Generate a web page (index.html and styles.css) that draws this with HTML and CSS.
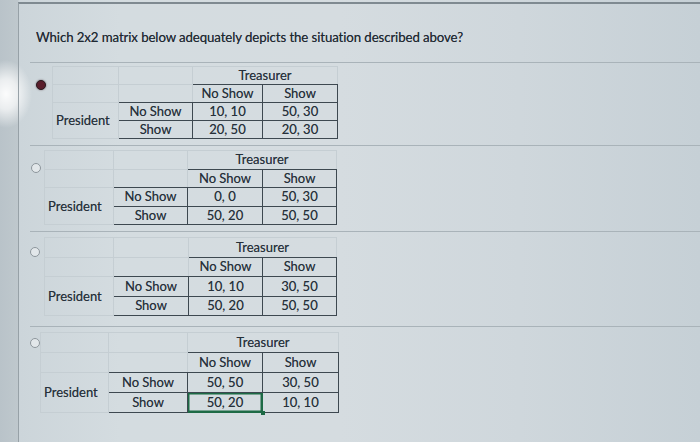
FILE: index.html
```html
<!DOCTYPE html>
<html>
<head>
<meta charset="utf-8">
<link rel="stylesheet" href="styles.css">
</head>
<body>
<div class="screen">
  <div class="panel">
    <p class="question">Which 2x2 matrix below adequately depicts the situation described above?</p>
    <div class="options">
      <div class="option o1">
        <span class="radio checked"></span>
        <table class="matrix">
          <colgroup><col class="c0"><col class="c1"><col class="c2"><col class="c3"></colgroup>
          <tr><td class="g"></td><td class="g"></td><td class="title" colspan="2">Treasurer</td></tr>
          <tr><td class="g"></td><td class="g gb"></td><td class="d">No Show</td><td class="d">Show</td></tr>
          <tr><td class="g pres" rowspan="2">President</td><td class="d">No Show</td><td class="d">10, 10</td><td class="d">50, 30</td></tr>
          <tr><td class="d">Show</td><td class="d">20, 50</td><td class="d">20, 30</td></tr>
        </table>
      </div>
      <div class="option o2">
        <span class="radio"></span>
        <table class="matrix">
          <colgroup><col class="c0"><col class="c1"><col class="c2"><col class="c3"></colgroup>
          <tr><td class="g"></td><td class="g"></td><td class="title" colspan="2">Treasurer</td></tr>
          <tr><td class="g"></td><td class="g gb"></td><td class="d">No Show</td><td class="d">Show</td></tr>
          <tr><td class="g pres" rowspan="2">President</td><td class="d">No Show</td><td class="d">0, 0</td><td class="d">50, 30</td></tr>
          <tr><td class="d">Show</td><td class="d">50, 20</td><td class="d">50, 50</td></tr>
        </table>
      </div>
      <div class="option o3">
        <span class="radio"></span>
        <table class="matrix">
          <colgroup><col class="c0"><col class="c1"><col class="c2"><col class="c3"></colgroup>
          <tr><td class="g"></td><td class="g"></td><td class="title" colspan="2">Treasurer</td></tr>
          <tr><td class="g"></td><td class="g gb"></td><td class="d">No Show</td><td class="d">Show</td></tr>
          <tr><td class="g pres" rowspan="2">President</td><td class="d">No Show</td><td class="d">10, 10</td><td class="d">30, 50</td></tr>
          <tr><td class="d">Show</td><td class="d">50, 20</td><td class="d">50, 50</td></tr>
        </table>
      </div>
      <div class="option o4">
        <span class="radio"></span>
        <table class="matrix">
          <colgroup><col class="c0"><col class="c1"><col class="c2"><col class="c3"></colgroup>
          <tr><td class="g"></td><td class="g"></td><td class="title" colspan="2">Treasurer</td></tr>
          <tr><td class="g"></td><td class="g gb"></td><td class="d">No Show</td><td class="d">Show</td></tr>
          <tr><td class="g pres" rowspan="2">President</td><td class="d">No Show</td><td class="d">50, 50</td><td class="d">30, 50</td></tr>
          <tr><td class="d">Show</td><td class="d sel">50, 20</td><td class="d">10, 10</td></tr>
        </table>
      </div>
    </div>
  </div>
</div>
</body>
</html>
```

FILE: styles.css
```css
html, body {
  margin: 0;
  padding: 0;
}

body {
  width: 700px;
  height: 442px;
  overflow: hidden;
  font-family: Lato, "Open Sans", "Liberation Sans", sans-serif;
  color: #27313a;
}

.screen {
  height: 442px;
  background:
    radial-gradient(ellipse 26px 34px at 6px 94px, rgba(255,255,255,0.95), rgba(255,255,255,0.7) 45%, rgba(255,255,255,0) 100%),
    linear-gradient(to right, #b9c3c9 0, #bfc8cd 18px, #ccd5da 19px, #d4dce0 120px, #d5dce0 340px, #cfd7dc 520px, #c6d0d6 700px);
  overflow: hidden;
}

.panel {
  margin-left: 18px;
  margin-top: 2px;
  height: 440px;
  border-top: 2px solid #7f8a91;
  border-left: 1px solid #97a1a7;
  box-sizing: border-box;
}

.question {
  margin: 23px 0 0 17px;
  font-size: 13.25px;
  line-height: 20px;
  color: #1f2932;
  letter-spacing: -0.1px;
  text-shadow: 0 0 0.5px rgba(20, 30, 40, 0.6);
}

.options {
  margin-top: 15px;
  margin-left: 11px;
}

.option {
  display: flex;
  align-items: flex-start;
  border-top: 1px solid #a9b3b9;
  padding-left: var(--pl);
  padding-top: var(--pt);
  padding-bottom: var(--pb);
}

.radio {
  flex: none;
  width: 10px;
  height: 10px;
  box-sizing: border-box;
  border-radius: 50%;
  border: 1.5px solid #8d969c;
  background: #e2e7ea;
  margin-top: var(--rt);
  margin-right: var(--gap);
}

.radio.checked {
  border: 1.5px solid #2b1b20;
  background: #5a1e2c;
  box-shadow: 0 0 2px rgba(40, 10, 20, 0.6);
}

.matrix {
  border-collapse: collapse;
  table-layout: fixed;
  font-size: 13px;
  color: #26303a;
}

.matrix td {
  height: var(--rh);
  padding: 0;
  line-height: 1;
  text-align: center;
  vertical-align: middle;
  white-space: nowrap;
  text-shadow: 0 0 0.4px rgba(20, 30, 40, 0.5);
}

.c0 { width: var(--w0); }
.c1 { width: var(--w1); }
.c2 { width: var(--w2); }
.c3 { width: var(--w3); }

.matrix td.g {
  border: 1px solid #c5ced3;
}

.matrix td.d {
  border: 1px solid #3d4850;
}

.matrix td.gb {
  border-bottom-color: #3d4850;
}

.matrix td.title {
  border: 1px solid #c5ced3;
  border-bottom-color: #3d4850;
}

.matrix td.pres {
  text-align: left;
  padding-left: 3px;
}

.matrix td.sel {
  position: relative;
  box-shadow: inset 0 0 0 1.5px #1d6a45;
  border-color: #1d6a45;
}

.matrix td.sel::after {
  content: "";
  position: absolute;
  right: -3px;
  bottom: -3px;
  width: 4px;
  height: 4px;
  background: #1d6a45;
}

.o1 { --pl: 6px;  --gap: 6px; --rt: 14px; --pt: 3px; --pb: 6px;  --rh: 17px;  --w0: 66px; --w1: 74px; --w2: 70px; --w3: 75px; }
.o2 { --pl: 1px;  --gap: 3px; --rt: 13px; --pt: 4px; --pb: 6px;  --rh: 17.5px; --w0: 69px; --w1: 74px; --w2: 75px; --w3: 74px; }
.o3 { --pl: 0px;  --gap: 4px; --rt: 10px; --pt: 5px; --pb: 10px; --rh: 18.5px; --w0: 69px; --w1: 75px; --w2: 74px; --w3: 74px; }
.o4 { --pl: 0px;  --gap: 0px; --rt: 6px;  --pt: 5px; --pb: 20px; --rh: 19px;  --w0: 68px; --w1: 79px; --w2: 75px; --w3: 76px; }
```
